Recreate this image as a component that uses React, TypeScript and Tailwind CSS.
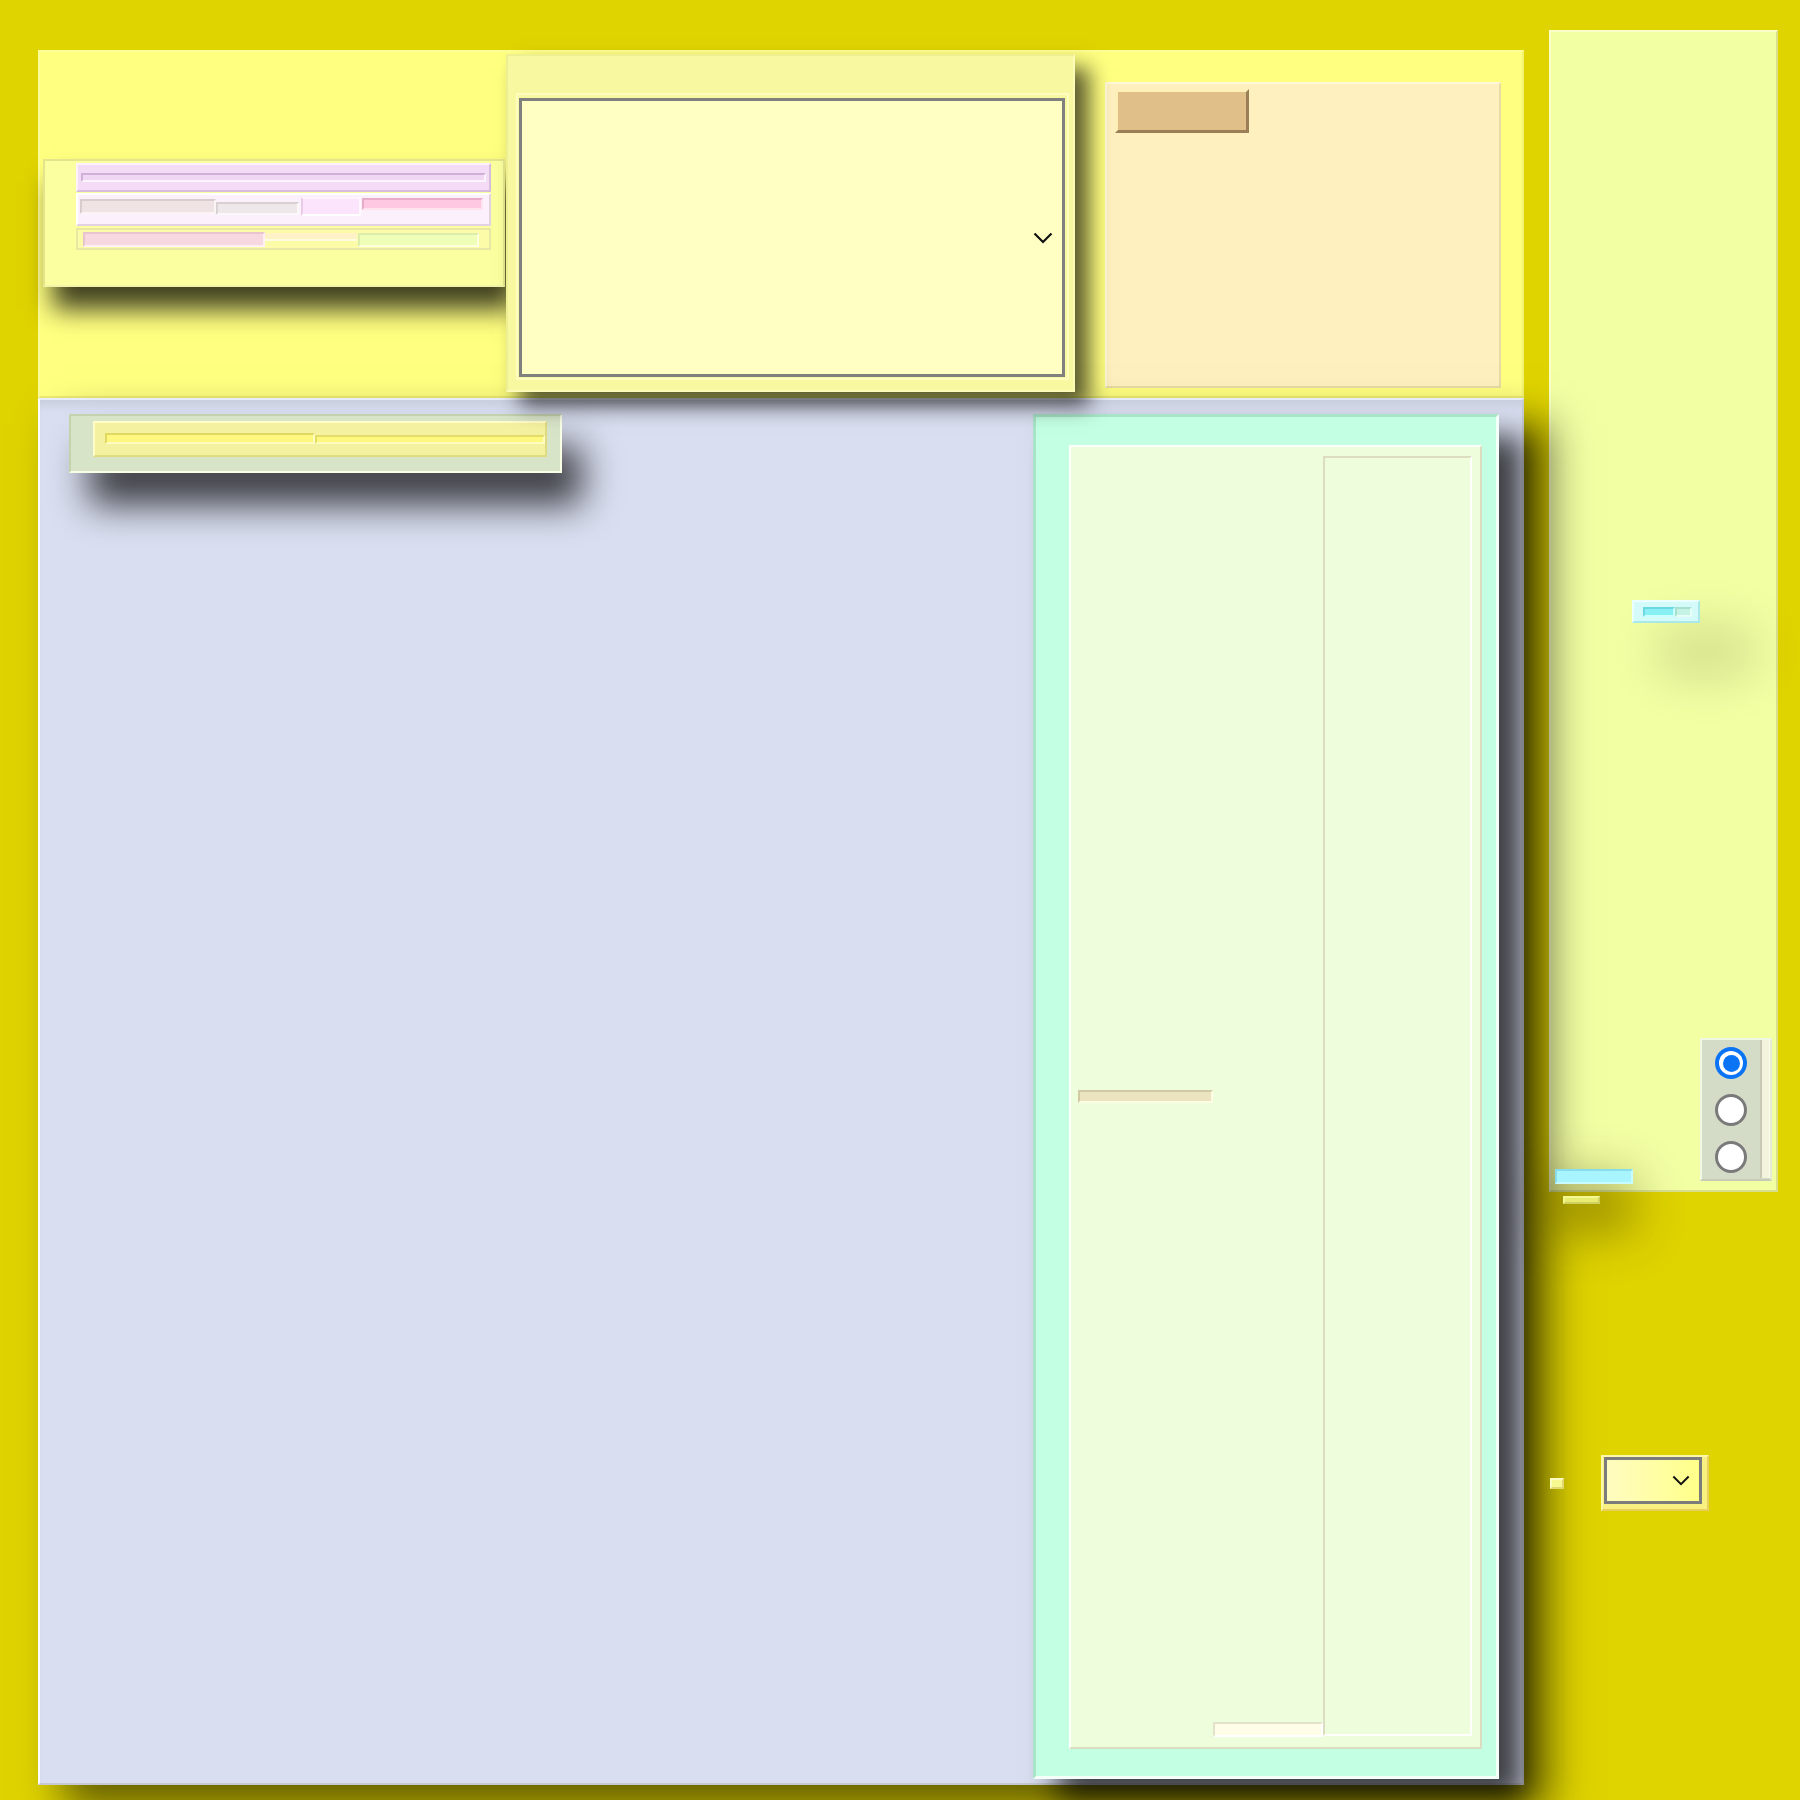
import React from "react";

function Chevron({ w, h }: { w: number; h: number }) {
  return (
    <svg width={w} height={h} viewBox="0 0 20 12" fill="none">
      <polyline points="1.5,1.5 10,10 18.5,1.5" stroke="#111" strokeWidth="2.2" strokeLinecap="butt" strokeLinejoin="miter" />
    </svg>
  );
}

function Radio({ checked }: { checked?: boolean }) {
  if (checked) {
    return (
      <div className="w-[32px] h-[32px] rounded-full bg-[#0b74f4] flex items-center justify-center">
        <div className="w-[24px] h-[24px] rounded-full bg-white flex items-center justify-center">
          <div className="w-[17px] h-[17px] rounded-full bg-[#0b74f4]" />
        </div>
      </div>
    );
  }
  return <div className="w-[32px] h-[32px] rounded-full bg-white border-[3px] border-[#7a7a7a]" />;
}

function TopSection() {
  return (
    <div className="h-[348px] bg-[#ffff80] border-2 border-t-[#ffff98] border-l-[#ffff98] border-r-[#f4f470] border-b-[#ecec70] flex items-start">
      {/* left card */}
      <div className="relative ml-[3px] mt-[107px] w-[462px] h-[128px] bg-[#fbff9f] border-2 border-t-[#e4e48c] border-l-[#e4e48c] border-r-[#e8e890] border-b-[#f4f4a8] shadow-[10px_22px_24px_rgba(0,0,0,0.75)] pl-[31px] pt-[2px] flex flex-col">
        {/* row 1 */}
        <div className="w-[415px] h-[29px] bg-[#f4dcf6] border-2 border-t-[#fcf0fc] border-l-[#fcf0fc] border-r-[#d8bcdc] border-b-[#d8bcdc] flex items-start">
          <div className="ml-[3px] mt-[8px] w-[405px] h-[9px] bg-[#f0d8f4] border-2 border-t-[#cfb0d6] border-l-[#cfb0d6] border-r-[#fcf4fc] border-b-[#fcf4fc]" />
        </div>
        {/* row 2 */}
        <div className="mt-[1px] w-[415px] h-[33px] bg-[#fcf0fc] border-2 border-t-[#ffffff] border-l-[#ffffff] border-r-[#e2d2e2] border-b-[#e2d2e2] flex items-start">
          <div className="ml-[2px] mt-[4px] w-[136px] h-[15px] bg-[#efe3e3] border-2 border-t-[#d8cccc] border-l-[#d8cccc] border-r-[#fbf4f4] border-b-[#fbf4f4]" />
          <div className="mt-[7px] w-[83px] h-[13px] bg-[#efe8ea] border-2 border-t-[#d8d0d2] border-l-[#d8d0d2] border-r-[#fcf8fa] border-b-[#fcf8fa]" />
          <div className="ml-[2px] mt-[2px] w-[60px] h-[19px] bg-[#fce4fc] border-2 border-t-[#fff4ff] border-l-[#e8cce8] border-r-[#fff8ff] border-b-[#ffffff]" />
          <div className="ml-[1px] mt-[3px] w-[121px] h-[12px] bg-[#ffc8e2] border-2 border-t-[#e8acc8] border-l-[#e8acc8] border-r-[#ffe4f0] border-b-[#ffe4f0]" />
        </div>
        {/* row 3 */}
        <div className="mt-[2px] w-[415px] h-[22px] bg-[#fcfca8] border-2 border-[#e8e8a4] flex items-start">
          <div className="ml-[5px] mt-[2px] w-[182px] h-[15px] bg-[#f8d8e0] border-2 border-t-[#e8c4cc] border-l-[#e8c4cc] border-r-[#fff0f4] border-b-[#fff0f4]" />
          <div className="mt-[3px] w-[92px] h-[8px] bg-[#fff2c8] border-b-2 border-b-[#fffce0]" />
          <div className="ml-[1px] mt-[3px] w-[121px] h-[14px] bg-[#f0ffb8] border-2 border-t-[#dcecac] border-l-[#dcecac] border-r-[#fcffe0] border-b-[#fcffe0]" />
        </div>
      </div>

      {/* dropdown panel */}
      <div className="relative z-20 ml-[1px] mt-[2px] w-[569px] h-[338px] bg-[#f8f8a0] border-2 border-t-[#eeee92] border-l-[#eeee92] border-r-[#fcfcb8] border-b-[#fcfcb8] shadow-[14px_14px_20px_rgba(0,0,0,0.65)] flex items-start">
        <div className="ml-[8px] mt-[37px] w-[553px] h-[287px] border-2 border-[#fffcc0] flex items-start">
          <div className="ml-[1px] mt-[3px] w-[546px] h-[279px] bg-[#ffffc4] border-[3px] border-[#808080] flex items-center justify-end pr-[9px]">
            <Chevron w={20} h={12} />
          </div>
        </div>
      </div>

      {/* right card */}
      <div className="ml-[30px] mt-[30px] w-[396px] h-[306px] bg-[#fff0bf] border-2 border-t-[#fff8d8] border-l-[#fff8d8] border-r-[#e8dca4] border-b-[#e8dca4] flex items-start">
        <div className="ml-[8px] mt-[5px] w-[134px] h-[44px] bg-[#e0bf88] border-[3px] border-t-[#fff0b8] border-l-[#fff0b8] border-r-[#9a7f58] border-b-[#9a7f58]" />
      </div>
    </div>
  );
}

function LowerSection() {
  return (
    <div className="relative z-10 h-[1387px] bg-[#d9def0] border-2 border-t-[#e8ecf8] border-l-[#ffffff] border-r-[#c8ccd6] border-b-[#c8c8d2] shadow-[25px_25px_40px_rgba(0,0,0,0.55),inset_0_10px_10px_-5px_rgba(0,0,0,0.08)] flex items-start">
      {/* small card */}
      <div className="ml-[29px] mt-[14px] w-[493px] h-[59px] bg-[#d8e4c8] border-2 border-t-[#c4d2ae] border-l-[#c4d2ae] border-r-[#f8ffe4] border-b-[#f8ffe4] shadow-[20px_32px_36px_rgba(0,0,0,0.72)] flex items-start">
        <div className="ml-[22px] mt-[5px] w-[454px] h-[36px] bg-[#f4f2a0] border-2 border-t-[#fffcc8] border-l-[#fffcc8] border-r-[#e0da80] border-b-[#e0da80] flex items-start">
          <div className="ml-[10px] mt-[10px] w-[210px] h-[11px] bg-[#fff880] border-2 border-t-[#e0d860] border-l-[#e0d860] border-r-[#fffcc0] border-b-[#fffcc0]" />
          <div className="mt-[12px] w-[230px] h-[9px] bg-[#fff880] border-2 border-t-[#e4dc68] border-l-[#e4dc68] border-r-[#fffcc0] border-b-[#fffcc0]" />
        </div>
      </div>

      {/* teal card */}
      <div className="ml-[471px] mt-[14px] w-[466px] h-[1365px] bg-[#c3ffe3] border-[3px] border-t-[#a8e4c8] border-l-[#a8e4c8] border-r-[#f4fffa] border-b-[#f4fffa] shadow-[24px_22px_28px_rgba(0,0,0,0.72)] flex items-start">
        <div className="ml-[33px] mt-[28px] w-[413px] h-[1304px] bg-[#eefddc] border-2 border-t-[#ffffff] border-l-[#ffffff] border-r-[#dcdcc0] border-b-[#dcdcc0] flex items-start">
          <div className="flex-1 h-full flex flex-col">
            <div className="ml-[7px] mt-[643px] w-[135px] h-[13px] bg-[#ece4c0] border-2 border-t-[#d2caa4] border-l-[#d2caa4] border-r-[#fffce4] border-b-[#fffce4]" />
            <div className="mt-auto mb-[10px] self-end w-[110px] h-[15px] bg-[#fffde8] border-2 border-t-[#e4e2c8] border-l-[#e4e2c8] border-r-[#ffffff] border-b-[#ffffff]" />
          </div>
          <div className="mt-[9px] mr-[8px] w-[149px] h-[1280px] border-2 border-t-[#dcdcc0] border-l-[#dcdcc0] border-r-[#ffffff] border-b-[#ffffff]" />
        </div>
      </div>
    </div>
  );
}

function RightColumn() {
  return (
    <div className="ml-[25px] mt-[30px] w-[229px] flex flex-col">
      <div className="h-[1162px] bg-[#f3ffa3] border-2 border-t-[#fbffc8] border-l-[#fbffc8] border-r-[#d8e090] border-b-[#d8e090] flex flex-col">
        {/* cyan widget */}
        <div className="ml-[81px] mt-[568px] w-[68px] h-[23px] bg-[#d4fafa] border-2 border-t-[#ecffff] border-l-[#ecffff] border-r-[#a8e8e8] border-b-[#a8e8e8] shadow-[40px_40px_50px_14px_rgba(0,0,0,0.13)] flex items-start">
          <div className="ml-[9px] mt-[5px] w-[49px] h-[10px] flex">
            <div className="w-[32px] h-full bg-[#88eff4] border-2 border-t-[#6cd8e0] border-l-[#6cd8e0] border-r-[#c8ffff] border-b-[#c8ffff]" />
            <div className="w-[17px] h-full bg-[#c4f2e4] border-2 border-t-[#a8e0d0] border-l-[#a8e0d0] border-r-[#e8fff8] border-b-[#e8fff8]" />
          </div>
        </div>
        {/* bottom row */}
        <div className="mt-auto flex items-end justify-between pl-[4px] pr-[4px] pb-[6px]">
          <div className="relative z-30 w-[78px] h-[15px] bg-[#a8f4ff] border-2 border-t-[#88dcec] border-l-[#88dcec] border-r-[#c8fbff] border-b-[#c8fbff]" />
          <div className="mb-[3px] w-[72px] h-[143px] bg-[#d4dcc8] border-2 border-t-[#f0f8e4] border-l-[#f0f8e4] border-r-[#e4ecd4] border-b-[#c4ccb8] flex">
            <div className="flex-1 flex flex-col items-center pt-[7px] gap-[15px]">
              <Radio checked />
              <Radio />
              <Radio />
            </div>
            <div className="w-[10px] h-[138px] bg-[#f4f4dc] border-l-2 border-l-[#c8c8b4] border-r border-r-[#fcfcec]" />
          </div>
        </div>
      </div>
      {/* small bar below */}
      <div className="relative z-20 ml-[14px] mt-[4px] w-[37px] h-[8px] bg-[#e8ec70] border-2 border-t-[#f4f890] border-l-[#f4f890] border-r-[#d0d060] border-b-[#d0d060] shadow-[10px_5px_50px_22px_rgba(60,50,0,0.45)]" />
      {/* square + select */}
      <div className="relative z-20 mt-[251px] flex items-center">
        <div className="ml-[1px] w-[14px] h-[11px] bg-[#f8f890] border-2 border-t-[#fcfcc0] border-l-[#fcfcc0] border-r-[#e0d870] border-b-[#e0d870]" />
        <div className="ml-[37px] w-[108px] h-[56px] bg-[#f8f080] border-2 border-t-[#fff8a8] border-l-[#fff8a8] border-r-[#e8d060] border-b-[#e8d060] flex items-start">
          <div className="ml-[1px] mt-[0px] w-[98px] h-[47px] bg-gradient-to-r from-[#fffcc0] to-[#ffff88] border-[3px] border-[#7c7c7c] flex items-center justify-end pr-[9px]">
            <Chevron w={18} h={11} />
          </div>
        </div>
      </div>
    </div>
  );
}

export default function App() {
  return (
    <div className="w-[1800px] h-[1800px] bg-[#dfd300] flex items-start overflow-hidden">
      <div className="ml-[38px] mt-[50px] w-[1486px] flex flex-col">
        <TopSection />
        <LowerSection />
      </div>
      <RightColumn />
    </div>
  );
}
